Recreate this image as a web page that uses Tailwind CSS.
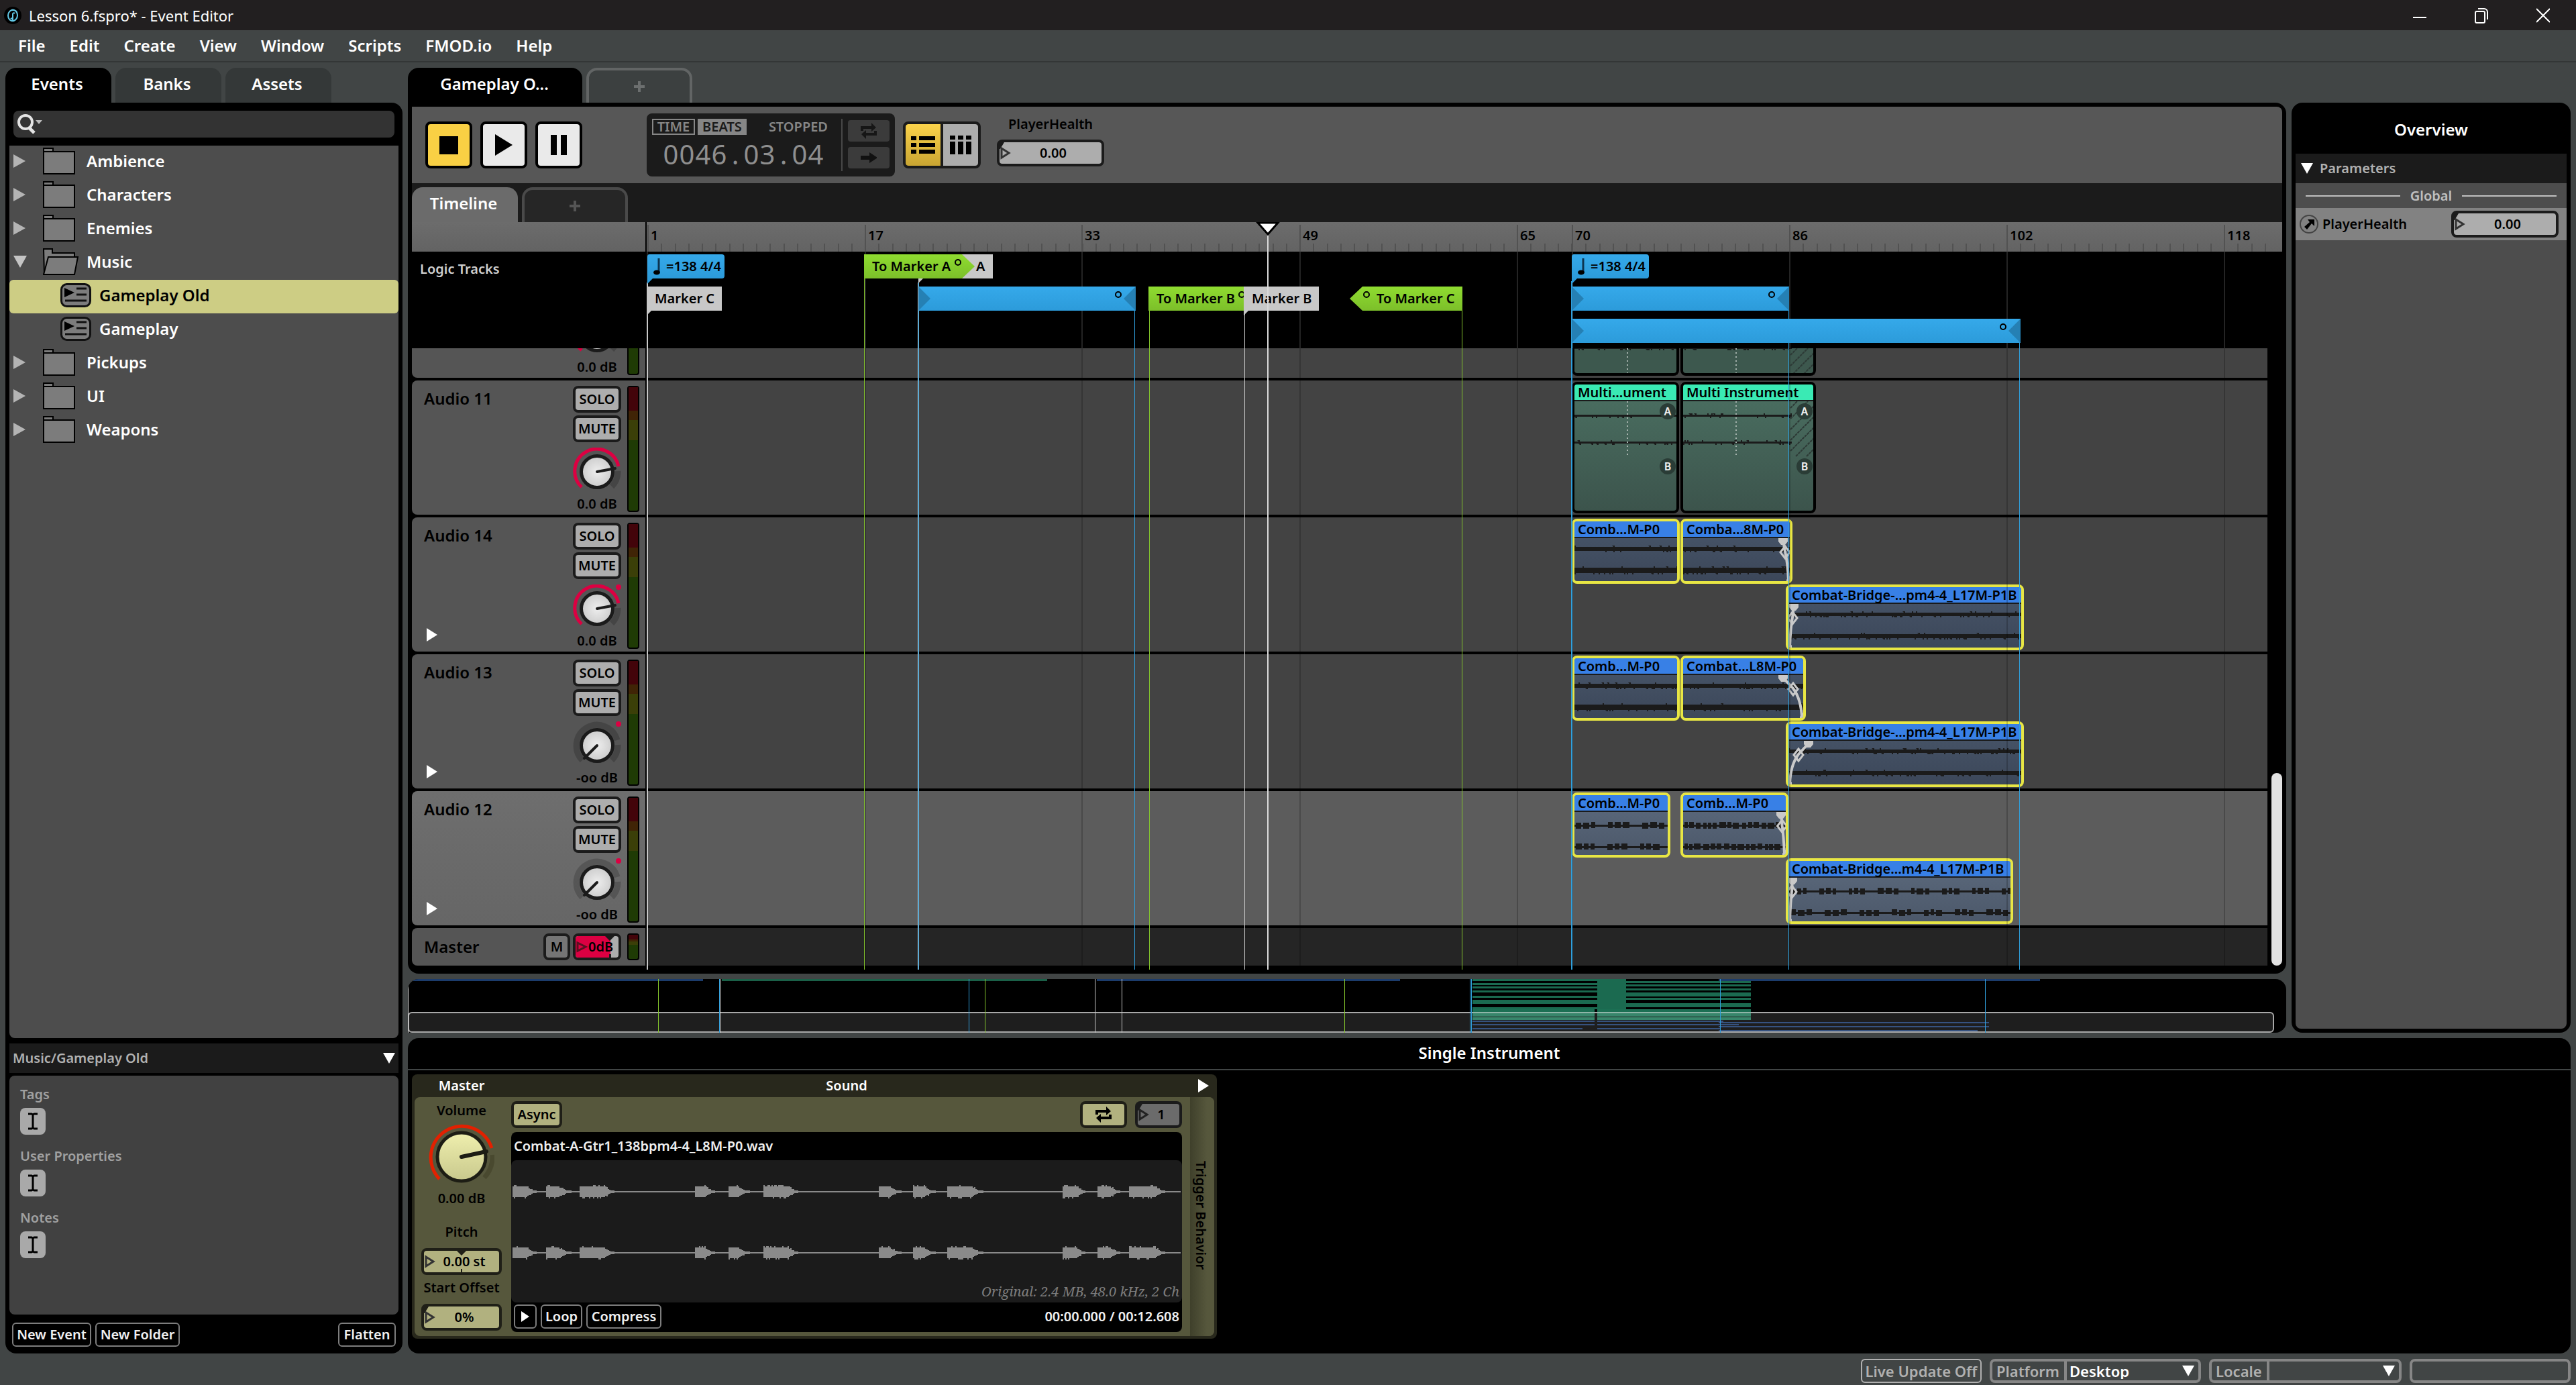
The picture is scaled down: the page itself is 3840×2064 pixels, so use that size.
<!DOCTYPE html>
<html lang="en">
<head>
<meta charset="utf-8">
<title>Lesson 6.fspro* - Event Editor</title>
<script src="https://cdn.jsdelivr.net/npm/@tailwindcss/browser@4"></script>
</head>
<body class="flex min-h-screen flex-col bg-[#414545] font-['Noto_Sans',sans-serif] text-[20px] leading-6 font-semibold text-black">

<!-- Title bar -->
<header class="flex h-[45px] items-center bg-[#221f20] pr-[3px] text-[22px] font-normal text-white">
  <svg class="ml-[5px] h-7 w-7" viewBox="0 0 28 28" fill="none"><circle cx="14" cy="14" r="13" fill="#000"/><path d="M16 22c-6 1-9-3-9-8s4-9 9-8c3 1 4 3 4 4M12 6c6-1 9 3 9 8s-4 9-9 8M14 22V12c0-2 2-2 3-1M11 18c1 1 3 1 3-2" stroke="#62c8e6" stroke-width="2"/></svg>
  <h1 class="ml-[10px] flex-1">Lesson 6.fspro* - Event Editor</h1>
  <button aria-label="Minimize" class="flex h-full w-[92px] items-center justify-center"><svg class="h-5 w-5" viewBox="0 0 20 20"><path d="M0 13h20" stroke="#fff" stroke-width="2"/></svg></button>
  <button aria-label="Restore" class="flex h-full w-[92px] items-center justify-center"><svg class="h-6 w-5" viewBox="0 0 20 24" fill="none" stroke="#fff" stroke-width="2"><rect x="1" y="6" width="14" height="17" rx="2"/><path d="M5 2h9a5 5 0 0 1 5 5v11"/></svg></button>
  <button aria-label="Close" class="flex h-full w-[92px] items-center justify-center"><svg class="h-6 w-5" viewBox="0 0 20 24" stroke="#fff" stroke-width="2"><path d="M0 2l20 20M20 2L0 22"/></svg></button>
</header>

<!-- Menu bar -->
<nav class="flex h-[48px] items-center gap-9 border-b-2 border-[#333636] pl-[27px] text-[24px] text-white">
  <a href="#">File</a><a href="#">Edit</a><a href="#">Create</a><a href="#">View</a><a href="#">Window</a><a href="#">Scripts</a><a href="#">FMOD.io</a><a href="#">Help</a>
</nav>

<main class="flex flex-1 gap-2 px-2 pt-2">
  <!-- Browser -->
  <aside class="flex w-[592px] shrink-0 flex-col">
    <div class="flex h-[52px] gap-[6px] text-[24px] text-white">
      <button class="w-[158px] rounded-t-2xl bg-black pr-1 pb-1">Events</button>
      <button class="w-[158px] rounded-t-2xl bg-[#343838] pr-1 pb-1">Banks</button>
      <button class="w-[158px] rounded-t-2xl bg-[#343838] pr-1 pb-1">Assets</button>
    </div>
    <div class="flex flex-1 flex-col rounded-2xl rounded-tl-none bg-black px-[6px]">
      <label class="mx-[6px] mt-3 flex h-10 items-center rounded-lg bg-[#333] pl-[5px]">
        <svg class="h-[30px] w-[42px]" viewBox="0 0 42 30" fill="none"><circle cx="13" cy="12" r="10" stroke="#e4e4e4" stroke-width="4"/><path d="M18 20l8 8" stroke="#e4e4e4" stroke-width="5"/><path d="M28 9h10l-5 6z" fill="#bbb"/></svg>
        <input type="text" aria-label="Search events" class="flex-1 bg-transparent text-white outline-none">
      </label>
      <ul id="tree" class="mt-3 flex-1 rounded-b-lg bg-[#4d4d4d] text-[24px] text-white"></ul>
      <button class="mt-2 flex h-[44px] items-center justify-between bg-[#1b1b1b] px-[5px] text-left text-[#b0b0b0]">Music/Gameplay Old
        <svg class="h-4 w-[18px]" viewBox="0 0 18 16"><path d="M0 0h18l-9 16z" fill="#fff"/></svg></button>
      <section class="mt-1 flex h-[356px] flex-col gap-5 rounded-lg bg-[#414141] px-4 pt-4 text-[#a0a0a0]">
        <div><h2>Tags</h2><button aria-label="Edit tags" class="mt-2 flex h-10 w-[38px] items-center justify-center rounded-lg bg-[#a9a9a9]"><svg class="h-[26px] w-[14px]" viewBox="0 0 14 26" fill="none" stroke="#000" stroke-width="3"><path d="M0 2h5l2 1 2-1h5M0 24h5l2-1 2 1h5M7 2v22"/></svg></button></div>
        <div><h2>User Properties</h2><button aria-label="Edit user properties" class="mt-2 flex h-10 w-[38px] items-center justify-center rounded-lg bg-[#a9a9a9]"><svg class="h-[26px] w-[14px]" viewBox="0 0 14 26" fill="none" stroke="#000" stroke-width="3"><path d="M0 2h5l2 1 2-1h5M0 24h5l2-1 2 1h5M7 2v22"/></svg></button></div>
        <div><h2>Notes</h2><button aria-label="Edit notes" class="mt-2 flex h-10 w-[38px] items-center justify-center rounded-lg bg-[#a9a9a9]"><svg class="h-[26px] w-[14px]" viewBox="0 0 14 26" fill="none" stroke="#000" stroke-width="3"><path d="M0 2h5l2 1 2-1h5M0 24h5l2-1 2 1h5M7 2v22"/></svg></button></div>
      </section>
      <div class="flex h-[58px] items-center gap-[6px] px-1 pt-[2px] text-[#f0f0f0]">
        <button class="h-9 w-[118px] rounded-md border-2 border-[#7d7d7d]">New Event</button>
        <button class="h-9 w-[126px] rounded-md border-2 border-[#7d7d7d]">New Folder</button>
        <button class="ml-auto h-9 w-[86px] rounded-md border-2 border-[#7d7d7d]">Flatten</button>
      </div>
    </div>
  </aside>

  <div class="flex min-w-0 flex-1 flex-col gap-2">
    <div class="flex flex-1 gap-2">
      <div class="flex min-w-0 flex-1 flex-col">
        <div class="flex h-[52px] gap-[6px] text-[24px]">
          <button class="w-[260px] rounded-t-2xl bg-black pr-[2px] pb-1 text-white">Gameplay O...</button>
          <button aria-label="New tab" class="flex w-[158px] items-center justify-center rounded-t-2xl border-4 border-b-0 border-[#626565] bg-[#3c4040]"><svg class="h-4 w-4" viewBox="0 0 16 16"><path d="M0 8h16M8 0v16" stroke="#6c6f6f" stroke-width="4"/></svg></button>
        </div>
        <section class="flex flex-1 flex-col rounded-2xl rounded-tl-none bg-black px-[6px] pt-[6px]">
          <!-- Transport -->
          <div class="flex h-[114px] items-start rounded-tr-lg bg-[#575757] pl-5">
            <div class="mt-[22px] flex gap-3">
              <button aria-label="Stop" class="flex h-[70px] w-[70px] items-center justify-center rounded-lg border-4 border-black bg-[#f9d044]"><span class="h-[27px] w-7 bg-black"></span></button>
              <button aria-label="Play" class="flex h-[70px] w-[70px] items-center justify-center rounded-lg border-4 border-black bg-[#eaeaea]"><svg class="h-8 w-7" viewBox="0 0 28 32"><path d="M1 0l26 16L1 32z"/></svg></button>
              <button aria-label="Pause" class="flex h-[70px] w-[70px] items-center justify-center gap-1.5 rounded-lg border-4 border-black bg-[#eaeaea]"><span class="h-[30px] w-[9px] bg-black"></span><span class="h-[30px] w-[9px] bg-black"></span></button>
            </div>
            <div class="mt-[10px] ml-24 flex h-[94px] w-[370px] gap-2 rounded-lg bg-[#1b1b1b] p-2 text-[#868686]">
              <div class="flex flex-1 flex-col border-r-2 border-[#484848]">
                <div class="flex h-6 gap-1"><button class="flex w-16 items-center justify-center border-2 border-[#868686]">TIME</button><button class="flex w-[73px] items-center justify-center bg-[#868686] text-[#1b1b1b]">BEATS</button><span class="ml-auto pr-5">STOPPED</span></div>
                <output class="mt-[7px] flex pl-4 text-[40px] leading-[44px] font-normal text-[#8f8f8f]"><span class="w-6 text-center">0</span><span class="w-6 text-center">0</span><span class="w-6 text-center">4</span><span class="w-6 text-center">6</span><span class="w-6 text-center">.</span><span class="w-6 text-center">0</span><span class="w-6 text-center">3</span><span class="w-6 text-center">.</span><span class="w-6 text-center">0</span><span class="w-6 text-center">4</span></output>
              </div>
              <div class="mt-[2px] flex flex-col gap-2">
                <button aria-label="Loop playback" class="flex h-8 w-[62px] items-center justify-center rounded-sm bg-[#3b3b3b]"><svg class="h-6 w-6" viewBox="0 0 24 24" fill="none" stroke="#161616" stroke-width="4"><path d="M2 12V7h15M22 12v5H7"/><path d="M16 0l7 7-7 6zM8 11l-7 6 7 7z" fill="#161616" stroke="none"/></svg></button>
                <button aria-label="Follow playback" class="flex h-8 w-[62px] items-center justify-center rounded-sm bg-[#3b3b3b]"><svg class="h-4 w-6" viewBox="0 0 24 16"><path d="M0 5h13V0l12 8-12 8v-5H0z" fill="#111"/></svg></button>
              </div>
            </div>
            <div class="mt-[22px] ml-3 flex h-[70px] w-[116px] overflow-hidden rounded-lg border-4 border-[#1b1b1b] bg-[#1b1b1b]">
              <button aria-label="Tracks view" class="flex w-[52px] items-center justify-center rounded-l-sm bg-linear-to-b from-[#fbd34a] to-[#c9a532]"><svg class="h-7 w-9" viewBox="0 0 36 28"><path d="M0 1h8v6H0zM12 1h24v6H12zM0 11h8v6H0zM12 11h24v6H12zM0 21h8v6H0zM12 21h24v6H12z"/></svg></button>
              <button aria-label="Mixer view" class="ml-1 flex flex-1 items-center justify-center rounded-r-sm bg-[#adadad]"><svg class="h-7 w-8" viewBox="0 0 32 28"><path d="M0 0h8v6H0zM12 0h8v6h-8zM24 0h8v6h-8zM0 9h8v19H0zM12 9h8v19h-8zM24 9h8v19h-8z"/></svg></button>
            </div>
            <label class="mt-[14px] ml-6 flex w-40 flex-col items-center gap-[11px]">PlayerHealth
              <span class="relative flex h-10 w-full rounded-lg border-4 border-[#1b1b1b] bg-[#adadad]"><input class="w-full bg-transparent pl-2 text-center outline-none" value="0.00"><svg class="absolute top-0 left-0 h-8 w-5" viewBox="0 0 20 32"><path d="M0 0h7L1 10H0z" fill="#1b1b1b"/><path d="M3 9l11 7-11 7z" fill="none" stroke="#333" stroke-width="3"/></svg></span></label>
          </div>
          <!-- Parameter sheet tabs -->
          <div class="flex h-[58px] items-end gap-[6px] bg-[#1b1b1b] text-[24px] text-white">
            <button class="h-[52px] w-[158px] rounded-t-2xl bg-[#6b6b6b] pr-1 pb-1">Timeline</button>
            <button aria-label="Add sheet" class="flex h-[52px] w-[158px] items-center justify-center rounded-t-2xl border-4 border-b-0 border-[#4a4a4a] bg-[#262626]"><svg class="h-4 w-4" viewBox="0 0 16 16"><path d="M0 8h16M8 0v16" stroke="#555" stroke-width="4"/></svg></button>
          </div>
          <!-- Timeline -->
          <div class="relative flex-1">
            <div class="flex h-11 bg-linear-to-b from-[#6c6c6c] to-[#636363]"><div class="w-[348px]"></div><div id="ruler" class="relative flex-1 overflow-hidden border-l-2 border-black"></div></div>
            <div class="flex h-36 bg-black pt-[14px] pl-3 text-[#cfcfcf]"><h2>Logic Tracks</h2></div>
            <div class="flex">
              <div id="tracks" class="flex flex-1 flex-col gap-1"></div>
              <div class="flex w-[22px] flex-col items-end justify-end"><div class="h-[287px] w-4 rounded-full bg-[#e2e2e2]"></div></div>
            </div>
            <div id="lines" class="pointer-events-none absolute inset-y-0 right-[22px] left-[348px] overflow-hidden"></div>
            <div id="logic" class="absolute top-0 right-[22px] left-[348px] h-[188px]"></div>
          </div>
        </section>
        <!-- Birdseye view -->
        <div id="map" class="relative mt-2 h-20 overflow-hidden rounded-2xl rounded-bl-none bg-black"></div>
      </div>

      <!-- Overview -->
      <aside class="mt-[52px] flex w-[416px] shrink-0 flex-col rounded-2xl bg-black px-[6px] pb-[6px]">
        <h2 class="flex h-[76px] items-center justify-center pt-1 text-[24px] text-white">Overview</h2>
        <button class="flex h-11 items-center gap-[10px] bg-[#1b1b1b] pl-2 text-[#b0b0b0]"><svg class="h-4 w-[18px]" viewBox="0 0 18 16"><path d="M0 0h18l-9 16z" fill="#fff"/></svg>Parameters</button>
        <div class="flex-1 rounded-b-lg bg-[#4d4d4d]">
          <div class="flex h-[37px] items-center gap-[15px] px-[15px] text-[#c0c0c0]"><span class="h-[2px] flex-1 bg-[#c0c0c0]"></span>Global<span class="h-[2px] flex-1 bg-[#c0c0c0]"></span></div>
          <label class="flex h-12 items-center bg-[#828282] pr-3 pl-[6px]">
            <svg class="mr-[6px] h-7 w-7" viewBox="0 0 28 28"><circle cx="14" cy="14" r="13" fill="none" stroke="#444" stroke-width="2"/><path d="M12 7h10v10l-4-4-7 9-4-4 8-7z"/></svg>PlayerHealth
            <span class="relative ml-auto flex h-10 w-40 rounded-lg border-4 border-[#1b1b1b] bg-[#adadad]"><input class="w-full bg-transparent pl-2 text-center outline-none" value="0.00"><svg class="absolute top-0 left-0 h-8 w-5" viewBox="0 0 20 32"><path d="M0 0h7L1 10H0z" fill="#1b1b1b"/><path d="M3 9l11 7-11 7z" fill="none" stroke="#333" stroke-width="3"/></svg></span></label>
        </div>
      </aside>
    </div>

    <!-- Deck -->
    <section class="flex h-[470px] flex-col rounded-2xl bg-black">
      <h2 class="flex h-12 items-center justify-center border-b-2 border-[#414545] pb-[2px] text-[24px] text-white">Single Instrument</h2>
      <div class="mt-[6px] ml-[6px] flex h-[394px] w-[1200px] flex-col rounded-lg bg-[#28281c] px-1 pb-1">
        <div class="flex h-[34px] items-center text-center text-white"><h3 class="w-[140px]">Master</h3><h3 class="w-[1016px] pr-2">Sound</h3><button aria-label="Expand trigger behavior" class="flex w-9 justify-center pl-1"><svg class="h-5 w-4" viewBox="0 0 16 20"><path d="M0 0l16 10L0 20z" fill="#fff"/></svg></button></div>
        <div class="flex flex-1 rounded-lg bg-[#56573c]">
          <div class="flex w-[144px] flex-col items-center px-[11px] pt-2 pr-[15px]">
            <h4>Volume</h4>
            <svg class="mt-2 h-[98px] w-[98px] shrink-0" viewBox="-49 -49 98 98" fill="none"><path d="M-33 33A46.500 46.500 0 1 1 45 -13" stroke="#e32000" stroke-width="5"/><path d="M46 -3A46 46 0 0 1 34 31" stroke="#49492f" stroke-width="7"/><defs><linearGradient id="ky" x1="0" y1="0" x2="0" y2="1"><stop offset="0" stop-color="#efefae"/><stop offset="1" stop-color="#c8c88c"/></linearGradient></defs><circle r="36" fill="url(#ky)" stroke="#1d1d14" stroke-width="5"/><path d="M0 0L37 -8" stroke="#1d1d14" stroke-width="6" stroke-linecap="round"/></svg>
            <p class="mt-[1px]">0.00 dB</p>
            <label class="mt-[26px] flex w-[120px] flex-col items-center">Pitch
              <span class="relative mt-3 flex h-10 w-full rounded-lg border-4 border-[#1f1f17] bg-[#b1b17f]"><input class="w-full bg-transparent pl-2 text-center outline-none" value="0.00 st"><svg class="absolute top-0 left-0 h-8 w-28" viewBox="0 0 112 32"><path d="M49 0h14l-7 7zM55 27h2v5h-2z" fill="#1f1f17"/><path d="M3 9l11 7-11 7z" fill="none" stroke="#333" stroke-width="3"/></svg></span></label>
            <label class="mt-[7px] flex w-[120px] flex-col items-center">Start Offset
              <span class="relative mt-3 flex h-10 w-full rounded-lg border-4 border-[#1f1f17] bg-[#b1b17f]"><input class="w-full bg-transparent pl-2 text-center outline-none" value="0%"><svg class="absolute top-0 left-0 h-8 w-5" viewBox="0 0 20 32"><path d="M0 0h7L1 10H0z" fill="#1f1f17"/><path d="M3 9l11 7-11 7z" fill="none" stroke="#333" stroke-width="3"/></svg></span></label>
          </div>
          <div class="flex w-[1000px] flex-col pt-[6px]">
            <div class="flex h-10 gap-3"><button class="w-[76px] rounded-lg border-4 border-[#1f1f17] bg-[#b1b17f]">Async</button>
              <button aria-label="Loop instrument" class="ml-auto flex w-[70px] items-center justify-center rounded-lg border-4 border-[#1f1f17] bg-[#b1b17f]"><svg class="h-6 w-6" viewBox="0 0 24 24" fill="none" stroke="#000" stroke-width="4"><path d="M2 12V7h15M22 12v5H7"/><path d="M16 0l7 7-7 6zM8 11l-7 6 7 7z" fill="#000" stroke="none"/></svg></button>
              <span class="relative flex w-[70px] rounded-lg border-4 border-[#1b1b1b] bg-[#6b6b6b]"><input aria-label="Play count" class="w-full bg-transparent pl-2 text-center outline-none" value="1"><svg class="absolute top-0 left-0 h-8 w-5" viewBox="0 0 20 32"><path d="M0 0h7L1 10H0z" fill="#1b1b1b"/><path d="M3 9l11 7-11 7z" fill="none" stroke="#222" stroke-width="3"/></svg></span></div>
            <div class="mt-[6px] flex h-[298px] flex-col rounded-lg bg-black text-[#efefef]">
              <p class="flex h-[42px] items-center pl-1">Combat-A-Gtr1_138bpm4-4_L8M-P0.wav</p>
              <div class="relative flex flex-1 items-end justify-end rounded-lg bg-[#1b1b1b] pr-1 pb-1"><svg id="wave" class="absolute inset-0 h-full w-full"></svg><p class="font-['Noto_Serif','Liberation_Serif',serif] font-normal text-[#7e7e7e] italic">Original: 2.4 MB, 48.0 kHz, 2 Ch</p></div>
              <div class="flex h-11 items-center gap-[6px] px-1 pb-[2px]"><button aria-label="Audition" class="flex h-9 w-[34px] items-center justify-center rounded-md border-2 border-[#7d7d7d]"><svg class="h-4 w-3" viewBox="0 0 12 16"><path d="M0 0l12 8-12 8z" fill="#fff"/></svg></button><button class="h-9 w-[62px] rounded-md border-2 border-[#7d7d7d]">Loop</button><button class="h-9 w-[112px] rounded-md border-2 border-[#7d7d7d]">Compress</button><span class="ml-auto">00:00.000 / 00:12.608</span></div>
            </div>
          </div>
          <div class="ml-3 flex w-9 items-center justify-center rounded-r-lg bg-linear-to-r from-[#3f402b] to-[#56573c] to-70% pr-1 pb-1"><span class="[writing-mode:vertical-rl]">Trigger Behavior</span></div>
        </div>
      </div>
    </section>
  </div>
</main>

<!-- Status bar -->
<footer class="flex h-[47px] items-start justify-end gap-3 px-2 pt-2 text-[22px] text-[#b0b0b0]">
  <button class="h-9 w-[180px] rounded-md border-2 border-[#b0b0b0]">Live Update Off</button>
  <label class="relative flex h-9 w-[315px] items-center rounded-lg border-4 border-[#868686] pl-[6px]">Platform
    <select class="ml-[7px] h-full flex-1 appearance-none border-l-4 border-[#868686] bg-transparent pl-1 text-white"><option>Desktop</option></select><svg class="pointer-events-none absolute right-[6px] h-4 w-[18px]" viewBox="0 0 18 16"><path d="M0 0h18l-9 16z" fill="#fff"/></svg></label>
  <label class="relative flex h-9 w-[287px] items-center rounded-lg border-4 border-[#868686] pl-[6px]">Locale
    <select class="ml-[7px] h-full flex-1 appearance-none border-l-4 border-[#868686] bg-transparent text-white"><option></option></select><svg class="pointer-events-none absolute right-[6px] h-4 w-[18px]" viewBox="0 0 18 16"><path d="M0 0h18l-9 16z" fill="#fff"/></svg></label>
  <div class="h-9 w-[240px] rounded-lg border-4 border-[#868686]"></div>
</footer>

<script>
const $ = id => document.getElementById(id);
let seed = 7;
const rnd = () => (seed = (seed * 16807) % 2147483647) / 2147483647;

/* Browser tree */
const right = '<svg class="h-5 w-[18px]" viewBox="0 0 18 20"><path d="M0 0l18 10L0 20z" fill="#b4b4b4"/></svg>';
const down = '<svg class="h-[18px] w-5" viewBox="0 0 20 18"><path d="M0 0h20l-10 18z" fill="#c4c4c4"/></svg>';
const folder = '<svg class="h-10 w-[54px]" viewBox="0 0 54 40" fill="#7c7c7c" stroke="#000" stroke-width="2"><path d="M1 6V1h14v5"/><path d="M1 6h46v33H1z"/></svg>';
const folderOpen = '<svg class="h-10 w-[54px]" viewBox="0 0 54 40" fill="#7c7c7c" stroke="#000" stroke-width="2"><path d="M2 39L1 1h13v6h33v6"/><path d="M8 13h44l-5 26H1z"/></svg>';
const eventIcon = '<svg class="h-9 w-[46px]" viewBox="0 0 46 36"><rect x="1.500" y="1.500" width="43" height="33" rx="8" fill="#7c7c7c" stroke="#111" stroke-width="3"/><path d="M6 7l15 7-15 7z"/><path d="M24 8h15M24 17h15M7 26h32" stroke="#111" stroke-width="3"/></svg>';
for (const [name, kind] of [['Ambience','f'],['Characters','f'],['Enemies','f'],['Music','o'],['Gameplay Old','s'],['Gameplay','e'],['Pickups','f'],['UI','f'],['Weapons','f']]) {
  if (kind === 'f' || kind === 'o')
    $('tree').innerHTML += `<li class="flex h-[50px] items-center pb-1 pl-[6px]"><span class="w-[44px]">${kind === 'f' ? right : down}</span>${kind === 'f' ? folder : folderOpen}<span class="ml-[11px]">${name}</span></li>`;
  else
    $('tree').innerHTML += kind === 's'
      ? `<li class="flex h-[50px] items-center rounded-md bg-[#cdcd84] pb-1 pl-[76px] text-black">${eventIcon}<span class="ml-3">${name}</span></li>`
      : `<li class="flex h-[50px] items-center pb-1 pl-[76px]">${eventIcon}<span class="ml-3">${name}</span></li>`;
}

/* Ruler: 16 bars every 324px */
let r = '';
for (let i = 0; i < 69; i++) r += `<i class="absolute bottom-0 h-3 w-[2px] bg-[#525252]" style="left:${Math.round(20.25 * i) + 1}px"></i>`;
for (let i = 1; i < 52; i++) r += `<i class="absolute bottom-0 h-3 w-[2px] bg-[#525252]" style="left:${Math.round(1379 + 20.25 * i)}px"></i>`;
for (const [x, n] of [[1,1],[325,17],[648,33],[973,49],[1297,65],[1379,70],[1703,86],[2027,102],[2351,118]])
  r += `<i class="absolute bottom-0 h-10 w-[2px] bg-[#525252]" style="left:${x}px"></i><span class="absolute top-2" style="left:${x + 5}px">${n}</span>`;
$('ruler').innerHTML = r;

/* Tracks */
const knobArt = (off, dot) => `<defs><radialGradient id="kg"><stop offset="0" stop-color="#eee"/><stop offset="1" stop-color="#ccc"/></radialGradient></defs>
<path d="M-23 23A33 33 0 1 1 32 -8" stroke="${off ? '#0000' : '#dc0042'}" stroke-width="5"/>${off ? '<path d="M-22 22A31 31 0 1 1 30 -8" stroke="#000" stroke-opacity=".18" stroke-width="9"/>' : ''}
<path d="M31 -1A31 31 0 0 1 22 22" stroke="#000" stroke-opacity=".18" stroke-width="9"/><circle r="23.500" fill="url(#kg)" stroke="#1b1b1b" stroke-width="5"/>
<path d="${off ? 'M0 0L-19 19' : 'M0 0L27 -5'}" stroke="#1b1b1b" stroke-width="4" stroke-linecap="round"/>${dot ? '<circle cx="32" cy="-32" r="4" fill="#dc0042"/>' : ''}`;

const noiseBar = (y, h, w) => { let d = `M0 ${y}h${w}v${h}h-${w}z`; for (let x = 0; x < w; x += 2) if (rnd() < .22) d += `M${x} ${rnd() < .25 ? y - 2 : y + h}h${rnd() < .3 ? 4 : 2}v2h-2z`; return d; };
const blobBar = (y, w, dense) => { let d = `M0 ${y - 1}h${w}v3h-${w}z`; for (let x = 2; x < w - 6;) { const n = 3; for (let k = 0; k < n; k++) { const b = 5 + Math.round(rnd() * 5); d += `M${x} ${y - 4 - Math.round(rnd())}h${b}v9h-${b}z`; x += b + (dense ? 1 + Math.round(rnd() * 2) : 3); } x += dense ? 2 : 16; } return d; };
const hatch = h => { let p = ''; for (let y = 10; y < h + 36; y += 16) { const a = Math.max(0, y - h), b = Math.min(36, y); if (a < 36) p += `M${160 + a} ${y - a}L${160 + b} ${y - b}`; } return `<path d="${p}" stroke="#2d3a36" stroke-width="2" stroke-dasharray="4 1"/>`; };

function clip(x, top, w, h, label, kind, fade) {
  const multi = kind === 'multi', iw = w - 8;
  let art = '';
  if (multi) {
    art = `<path d="${noiseBar(20, 3, Math.min(iw, 162))}${noiseBar(60, 3, Math.min(iw, 162))}" fill="#1b1b1b"/><path d="M79 0v82" stroke="#a9b5b0" stroke-width="2" stroke-dasharray="2 4"/>`;
    if (w > 180) art += hatch(82);
    for (const [t, y] of [['A', 15], ['B', 97]]) art += `<circle cx="${iw - 13}" cy="${y}" r="12" fill="#2a3c36"/><text x="${iw - 13}" y="${y + 6}" text-anchor="middle" font-size="16" fill="#eee">${t}</text>`;
  } else if (kind === 'noise') art = `<path d="${noiseBar(13, h > 97 ? 5 : 6, iw)}${noiseBar(h > 97 ? 45 : 44, h > 97 ? 6 : 8, iw)}" fill="#1b1b1b"/>`;
  else art = `<path d="${blobBar(20, iw, kind === 'dense')}${blobBar(52, iw, kind === 'dense')}" fill="#1b1b1b"/>`;
  if (fade) {
    const R = fade > 0, s = Math.abs(fade), X = v => R ? iw - v : v, c = X(s / 2 + (s < 15 ? 2 : 0));
    art += `<g stroke="#c9c9c9" stroke-width="4" fill="none"><path d="M${X(s)} 4L${c} 20Q${X(3)} 36 ${X(2)} 64"/><path d="M${c - 7} 21l7 -9 7 9 -7 9z" stroke-width="3"/></g><path d="M${X(s) - 7} 0h14v5l-4 5h-6l-4-5zM${X(0) - 5} 66v-4l5-6 5 6v4z" fill="#c9c9c9"/>`;
  }
  const box = multi ? 'border-black bg-linear-to-b from-[#4b7062] to-[#3c544c]' : kind === 'noise' ? 'border-[#e8e644] bg-linear-to-b from-[#48566a] to-[#3c4759]' : 'border-[#e8e644] bg-linear-to-b from-[#5c6a7d] to-[#4c586a]';
  const head = multi ? 'bg-[#3aeab4]' : 'bg-[#3880e6]';
  return `<div class="absolute overflow-hidden rounded-lg border-4 ${box}" style="left:${x - 965}px;top:${top}px;width:${w}px;height:${h}px"><h4 class="h-[25px] border-b-2 border-[#1b1b1b] pl-[5px] leading-[23px] whitespace-nowrap ${head}">${label}</h4><svg class="h-full w-full">${art}</svg></div>`;
}
/* Lower end of a clip whose title is scrolled out of view */
const clipEnd = (x, w) => `<div class="absolute top-0 h-[41px] overflow-hidden rounded-b-lg border-4 border-t-0 border-black bg-[#3d584e]" style="left:${x - 965}px;width:${w}px"><svg class="h-full w-full"><path d="${noiseBar(-1, 2, Math.min(w - 8, 162))}" fill="#1b1b1b"/><path d="M79 0v38" stroke="#a9b5b0" stroke-width="2" stroke-dasharray="2 4"/>${w > 180 ? hatch(38) : ''}</svg></div>`;
const B = 'Combat-Bridge-...pm4-4_L17M-P1B';
const tracks = [
  ['Audio 11', 0, 0, clip(2344, 2, 160, 196, 'Multi...ument', 'multi') + clip(2506, 2, 202, 196, 'Multi Instrument', 'multi')],
  ['Audio 14', 0, 1, clip(2344, 2, 161, 97, 'Comb...M-P0', 'noise') + clip(2506, 2, 167, 97, 'Comba...8M-P0', 'noise', 10) + clip(2663, 100, 355, 98, B, 'noise', -8)],
  ['Audio 13', 1, 1, clip(2344, 2, 161, 97, 'Comb...M-P0', 'noise') + clip(2506, 2, 187, 97, 'Combat...L8M-P0', 'noise', 30) + clip(2663, 100, 355, 98, B, 'noise', -30)],
  ['Audio 12', 1, 1, clip(2344, 2, 147, 97, 'Comb...M-P0', 'blob') + clip(2506, 2, 161, 97, 'Comb...M-P0', 'dense', 7) + clip(2663, 100, 339, 98, 'Combat-Bridge...m4-4_L17M-P1B', 'blob', -6)]
];
const row = ([name, off, dot, clips], sel) => `<div class="flex h-[200px] w-full shrink-0"><div class="flex w-[348px] rounded-l-lg pr-[9px] pl-[18px] ${sel ? 'bg-linear-to-b from-[#6e6e6e] to-[#666666]' : 'bg-[#555555]'}">
<div class="flex flex-1 flex-col justify-between pt-[15px] pb-[15px] text-[24px]"><h3>${name}</h3>${dot ? '<button aria-label="Show automation" class="ml-1 w-4"><svg class="h-5 w-4" viewBox="0 0 16 20"><path d="M0 0l16 10L0 20z" fill="#fff"/></svg></button>' : ''}</div>
<div class="flex w-[72px] flex-col items-center gap-1 pt-2"><button class="flex h-10 w-full items-center justify-center rounded-lg border-4 border-[#1b1b1b] bg-[#adadad]">SOLO</button><button class="flex h-10 w-full items-center justify-center rounded-lg border-4 border-[#1b1b1b] bg-[#adadad]">MUTE</button><svg class="mt-1 h-[72px] w-[72px] shrink-0" viewBox="-36 -36 72 72" fill="none">${knobArt(off, dot)}</svg><p class="-mt-1">${off ? '-oo dB' : '0.0 dB'}</p></div>
<div class="mt-2 ml-[9px] flex h-[188px] w-[18px] flex-col rounded-sm border-2 border-black bg-[#1f3b05]"><i class="h-[35px] bg-[#43040a]"></i><i class="h-[14px] bg-[#402406]"></i><i class="h-[30px] bg-[#3b3f08]"></i></div></div>
<div class="relative ml-[2px] flex-1 overflow-hidden ${sel ? 'bg-[#5c5c5c]' : 'bg-[#434343]'}">${clips}</div></div>`;
$('tracks').innerHTML = `<div class="flex h-11"><div class="flex w-[348px] justify-end rounded-bl-lg bg-[#555555] pr-[9px]"><div class="flex w-[72px] flex-col items-center gap-2"><svg class="h-2 w-[72px] shrink-0" viewBox="-36 20 72 8" fill="none">${knobArt(0, 0)}</svg><p>0.0 dB</p></div><div class="ml-[9px] h-10 w-[18px] rounded-b-sm border-2 border-t-0 border-black bg-[#1f3b05]"></div></div><div class="relative ml-[2px] flex-1 bg-[#434343]">${clipEnd(2344, 160)}${clipEnd(2506, 202)}</div></div>` + tracks.map((t, i) => row(t, i === 3)).join('') +
`<div class="flex h-14"><div class="flex w-[348px] items-center rounded-l-lg bg-[#555555] pr-[9px] pl-[18px]"><h3 class="flex-1 text-[24px]">Master</h3>
<button aria-label="Mute master" class="mr-1 flex h-10 w-10 items-center justify-center rounded-lg border-4 border-[#1b1b1b] bg-[#757575]">M</button>
<div class="relative h-10 w-[72px] overflow-hidden rounded-lg border-4 border-[#1b1b1b] bg-[#adadad]"><svg class="absolute inset-0 h-8 w-16" viewBox="0 0 64 32"><path d="M0 0h52v32H0z" fill="#dc0042"/><path d="M44 0h14l-7 7zM50 27h3v5h-3z" fill="#1b1b1b"/><path d="M3 10l12 6-12 6z" fill="none" stroke="#5a1020" stroke-width="3"/></svg><span class="relative block pl-[19px] leading-8">0dB</span></div>
<div class="ml-[9px] flex h-10 w-[18px] flex-col rounded-sm border-2 border-black bg-[#1f3b05]"><i class="h-[7px] bg-[#43040a]"></i><i class="h-[3px] bg-[#402406]"></i><i class="h-[5px] bg-[#3b3f08]"></i></div></div><div class="ml-[2px] flex-1 bg-[#252525]"></div></div>`;

/* Grid lines, marker lines, playhead; x is measured from the ruler's left edge */
let l = '';
for (const x of [2, 327, 650, 975, 1299, 1381, 1705, 2029, 2353])
  l += `<i class="absolute top-11 h-36 w-[2px] bg-[#242424]" style="left:${x}px"></i><i class="absolute top-[188px] bottom-3 w-[2px] bg-black/20" style="left:${x}px"></i>`;
for (const [x, w, top, c] of [[2,2,90,'#c8c8c8'],[326,1,80,'#84c62c'],[406,1,90,'#c8c8c8'],[407,1,90,'#2f9fdc'],[729,1,130,'#2f9fdc'],[751,1,130,'#84c62c'],[893,1,130,'#c8c8c8'],[1217,1,130,'#84c62c'],[1380,2,88,'#2f9fdc'],[1704,1,130,'#2f9fdc'],[2048,1,178,'#2f9fdc']])
  l += `<i class="absolute bottom-[6px]" style="left:${x}px;width:${w}px;top:${top}px;background:${c}"></i>`;
$('lines').innerHTML = l;

const marker = (x, y, w, html) => `<div class="absolute flex h-9 items-center whitespace-nowrap" style="left:${x}px;top:${y}px;width:${w}px">${html}</div>`;
const shape = (w, path, fill, extra = '') => `<svg class="absolute top-0 left-0 h-11 overflow-visible" width="${w}" height="44"><defs><linearGradient id="blue" gradientUnits="userSpaceOnUse" x1="0" y1="0" x2="0" y2="36"><stop offset="0" stop-color="#35a9ea"/><stop offset="1" stop-color="#2c9bda"/></linearGradient><linearGradient id="green" gradientUnits="userSpaceOnUse" x1="0" y1="0" x2="0" y2="36"><stop offset="0" stop-color="#8fdc30"/><stop offset="1" stop-color="#7cbf2a"/></linearGradient></defs><path d="${path}" fill="${fill}"/>${extra}</svg>`;
const ring = (x) => `<ellipse cx="${x}" cy="12" rx="4" ry="4" fill="none" stroke="#000" stroke-width="2"/>`;
const region = w => shape(w, `M0 0h${w}v36H0z`, 'url(#blue)', `<path d="M0 0l18 18L0 36zM${w} 0l-18 18 18 18z" fill="#2580b4"/>${ring(w - 26)}`);
const note = '<path d="M18 6v20" stroke="#0d3450" stroke-width="3"/><ellipse cx="15" cy="27" rx="5" ry="3.500"/>';
const tempo = shape(116, 'M4 0h108q4 0 4 4v28q0 4-4 4H9L1 44V4q0-4 3-4z', 'url(#blue)', note) + '<span class="relative pl-[29px]">=138 4/4</span>';
$('logic').innerHTML = marker(2, 48, 116, tempo)
 + marker(2, 96, 112, shape(112, 'M0 0h112v36H7L0 43z', '#c8c8c8') + '<span class="relative pl-3">Marker C</span>')
 + marker(407, 48, 111, shape(111, 'M0 0h111v36H7L0 43z', '#c8c8c8') + '<span class="relative pl-[86px]">A</span>')
 + marker(326, 48, 165, shape(165, 'M0 0h146l19 18-19 18H0z', 'url(#green)', ring(140)) + '<span class="relative pl-3">To Marker A</span>')
 + marker(407, 96, 324, region(324))
 + marker(750, 96, 142, shape(142, 'M0 0h142v36H0z', 'url(#green)', ring(139)) + '<span class="relative pl-3">To Marker B</span>')
 + marker(892, 96, 112, shape(112, 'M0 0h112v36H7L0 43z', '#c8c8c8') + '<span class="relative pl-3">Marker B</span>')
 + marker(1050, 96, 168, shape(168, 'M0 18L19 0h149v36H19z', 'url(#green)', ring(25)) + '<span class="relative pl-10">To Marker C</span>')
 + marker(1380, 48, 116, tempo) + marker(1381, 96, 324, region(324)) + marker(1381, 144, 669, region(669))
 + '<i class="absolute left-[927px] top-5 h-[1094px] w-[2px] bg-[#dadada]"></i><svg class="absolute top-0 left-[910px] h-5 w-9" viewBox="0 0 36 20"><path d="M3 1h30L18 18z" fill="#fff" stroke="#000" stroke-width="3"/></svg>';

/* Birdseye view */
let m = '';
const bar = (x1, x2, y, h, c) => m += `<i class="absolute" style="left:${x1 - 608}px;width:${x2 - x1}px;top:${y}px;height:${h}px;background:${c}"></i>`;
m += '<div class="absolute top-[49px] right-[18px] bottom-0 left-0 rounded-md border-2 border-[#a8a8a8] bg-[#1e1e1e]"></div>';
bar(616, 1048, 0, 3, '#1c3c6c'); bar(1076, 1561, 0, 3, '#1b6048'); bar(1635, 2087, 0, 3, '#1c3c6c'); bar(2562, 3041, 0, 3, '#1c3c6c');
for (const y of [0, 6, 11, 17, 25, 31, 34, 42]) bar(2195, 2424, y, 3, '#1b6a50');
for (const y of [3, 8, 14, 20, 23, 28, 36, 39]) bar(2381, 2610, y, 3, '#1b6a50');
for (const [a, b] of [[2195, 2377], [2381, 2610]]) { bar(a, b, 45, 5, '#1b6f53'); bar(a, b, 51, 5, '#37866b'); bar(a, b, 57, 4, '#37866b'); bar(a, b, 49, 2, '#8fb5a8'); }
for (const [a, b, y] of [[2195,2377,62],[2381,2569,62],[2195,2377,67],[2381,2592,67],[2195,2359,73],[2381,2564,73],[2562,2965,64],[2562,2965,70],[2562,2948,76]]) bar(a, b, y, 2, '#36527f');
for (const [x, c] of [[608,'#ccc'],[981,'#84c62c'],[1072,'#2f9fdc'],[1073,'#e0e0e0'],[1444,'#2f9fdc'],[1468,'#84c62c'],[1632,'#c8c8c8'],[1672,'#c8c8c8'],[2004,'#84c62c'],[2191,'#2f9fdc'],[2193,'#2f9fdc'],[2564,'#2f9fdc'],[2959,'#2f9fdc']]) bar(x, x + 1, 0, 80, c);
$('map').innerHTML = m;

/* Sound file waveform */
const hits = [[2,22,14],[52,20,18],[102,38,14],[274,16,14],[324,16,16],[376,38,14],[548,18,16],[599,18,16],[650,38,16],[822,22,12],[874,20,14],[921,40,14]];
let d = '';
for (const y of [47, 138]) {
  d += `M2 ${y - 1}h996v2H2z`;
  for (const [x, full, tail] of hits) for (let k = 0; k < full + tail; k += 2) {
    const a = (k < full ? 1 : Math.max(.2, .8 - (k - full) / tail));
    const up = Math.round((8 + (rnd() < .2 ? 2 : 0)) * a), dn = Math.round((8 + (rnd() < .2 ? 2 : 0)) * a);
    d += `M${x + k} ${y - up}h2v${up + dn}h-2z`;
  }
}
$('wave').innerHTML = `<path d="${d}" fill="#8a8a8a"/>`;
</script>
</body>
</html>
